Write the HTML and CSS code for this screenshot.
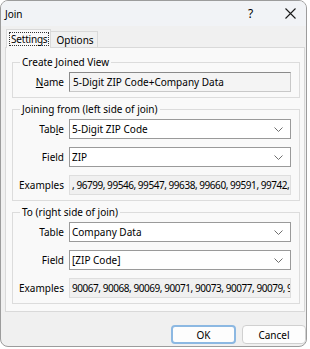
FILE: index.html
```html
<!DOCTYPE html>
<html>
<head>
<meta charset="utf-8">
<link rel="stylesheet" href="styles.css">
</head>
<body>
<div class="window">
  <div class="titlebar">
    <span class="title">Join</span>
    <span class="help">?</span>
    <span class="close"><svg width="11" height="11" viewBox="0 0 11 11"><path d="M0.5 0.5L10.5 10.5M10.5 0.5L0.5 10.5" stroke="#1a1a1a" stroke-width="1.1" fill="none"/></svg></span>
  </div>
  <div class="tabs">
    <div class="tab active"><span class="focus">Settings</span></div>
    <div class="tab">Options</div>
  </div>
  <div class="pane">
    <fieldset class="group g1">
      <legend>Create Joined View</legend>
      <div class="row">
        <span class="lbl"><u>N</u>ame</span>
        <div class="box edit">5-Digit ZIP Code+Company Data</div>
      </div>
    </fieldset>
    <fieldset class="group g2">
      <legend>Joining from (left side of join)</legend>
      <div class="row">
        <span class="lbl">Tab<u>l</u>e</span>
        <div class="box combo"><span class="val">5-Digit ZIP Code</span><svg class="chev" width="9" height="5" viewBox="0 0 9 5"><path d="M0.5 0.5L4.5 4.5L8.5 0.5" stroke="#6e6e6e" stroke-width="1" fill="none"/></svg></div>
      </div>
      <div class="row">
        <span class="lbl">Field</span>
        <div class="box combo"><span class="val">ZIP</span><svg class="chev" width="9" height="5" viewBox="0 0 9 5"><path d="M0.5 0.5L4.5 4.5L8.5 0.5" stroke="#6e6e6e" stroke-width="1" fill="none"/></svg></div>
      </div>
      <div class="row">
        <span class="lbl">Examples</span>
        <div class="box ro">, 96799, 99546, 99547, 99638, 99660, 99591, 99742, 99743</div>
      </div>
    </fieldset>
    <fieldset class="group g3">
      <legend>To (right side of join)</legend>
      <div class="row">
        <span class="lbl">Table</span>
        <div class="box combo"><span class="val">Company Data</span><svg class="chev" width="9" height="5" viewBox="0 0 9 5"><path d="M0.5 0.5L4.5 4.5L8.5 0.5" stroke="#6e6e6e" stroke-width="1" fill="none"/></svg></div>
      </div>
      <div class="row">
        <span class="lbl">Field</span>
        <div class="box combo"><span class="val">[ZIP Code]</span><svg class="chev" width="9" height="5" viewBox="0 0 9 5"><path d="M0.5 0.5L4.5 4.5L8.5 0.5" stroke="#6e6e6e" stroke-width="1" fill="none"/></svg></div>
      </div>
      <div class="row">
        <span class="lbl">Examples</span>
        <div class="box ro">90067, 90068, 90069, 90071, 90073, 90077, 90079, 90089</div>
      </div>
    </fieldset>
  </div>
  <div class="buttons">
    <div class="btn default">OK</div>
    <div class="btn">Cancel</div>
  </div>
</div>
</body>
</html>
```
FILE: styles.css
```css
html, body {
  margin: 0;
  padding: 0;
  background: #ffffff;
}
body {
  font-family: "Noto Sans", "Open Sans", sans-serif;
  font-size: 10px;
  color: #000;
}
.window {
  box-sizing: border-box;
  width: 307px;
  height: 347px;
  border: 1px solid #9c9c9c;
  border-radius: 8px;
  background: #f0f0f0;
  overflow: hidden;
}
.titlebar {
  height: 25px;
  display: flex;
  align-items: center;
  background: #f1f3f6;
  padding-left: 4px;
}
.title {
  flex: 1;
}
.help {
  width: 10px;
  font-size: 12px;
  margin-right: 27px;
}
.close {
  display: flex;
  margin-right: 10px;
}
.tabs {
  display: flex;
  align-items: flex-end;
  height: 18px;
  padding-left: 5px;
  margin-top: 3px;
}
.tab {
  box-sizing: border-box;
  height: 16px;
  padding: 0 3px 0 5px;
  display: flex;
  align-items: center;
  border: 1px solid #d9d9d9;
  border-bottom: none;
  border-left: none;
  background: #f0f0f0;
}
.tab.active {
  border-left: 1px solid #d9d9d9;
  background: #f9f9f9;
  padding: 0 1px 0 2px;
  position: relative;
  z-index: 1;
  margin-bottom: -1px;
  height: 19px;
}
.focus {
  border: 1px dotted #333;
  padding: 0 1px;
  line-height: 12px;
  letter-spacing: -0.2px;
}
.pane {
  box-sizing: border-box;
  margin-left: 4px;
  width: 300px;
  height: 265px;
  border: 1px solid #d9d9d9;
  background: #f9f9f9;
  padding: 7px 4px 0 6px;
}
.group {
  margin: 0;
  min-width: 0;
  min-inline-size: 0;
  border: 1px solid #dcdcdc;
  padding: 2px 8px 5px 4px;
  width: 288px;
  box-sizing: border-box;
}
.group + .group {
  margin-top: 4px;
}
.g3 {
  margin-top: 3px;
}
legend {
  padding: 0 2px;
  margin-left: 3px;
  line-height: 15px;
}
.row {
  display: flex;
  align-items: center;
  height: 20px;
}
.row + .row {
  margin-top: 8px;
}
.lbl {
  flex: 0 0 47px;
  display: flex;
  justify-content: flex-end;
  margin-right: 5px;
  white-space: nowrap;
}
.box {
  box-sizing: border-box;
  flex: 1 1 0;
  min-width: 0;
  height: 20px;
  padding: 0 3px;
  white-space: nowrap;
  overflow: hidden;
}
.edit {
  display: block;
  line-height: 18px;
  background: #f4f4f4;
  border: 1px solid #8a8a8a;
  border-right-color: #c8c8c8;
  border-bottom-color: #c8c8c8;
}
.combo {
  display: flex;
  align-items: center;
  background: #ffffff;
  border: 1px solid #9a9a9a;
  padding-left: 2px;
}
.combo .val {
  flex: 1 1 0;
  min-width: 0;
  overflow: hidden;
}
.chev {
  flex: none;
  margin-right: 4px;
}
.ro {
  display: block;
  line-height: 18px;
  background: #f0f0f0;
  border: 1px solid #dedede;
  padding-left: 2px;
  letter-spacing: -0.45px;
}
.buttons {
  display: flex;
  justify-content: flex-end;
  padding: 13px 0 0 0;
  gap: 6px;
}
.btn {
  box-sizing: border-box;
  width: 64px;
  height: 19px;
  display: flex;
  align-items: center;
  justify-content: center;
  border: 1px solid #d0d0d0;
  border-radius: 4px;
  background: #fdfdfd;
}
.btn.default {
  width: 65px;
  border: 2px solid #8cb8e2;
}
```
